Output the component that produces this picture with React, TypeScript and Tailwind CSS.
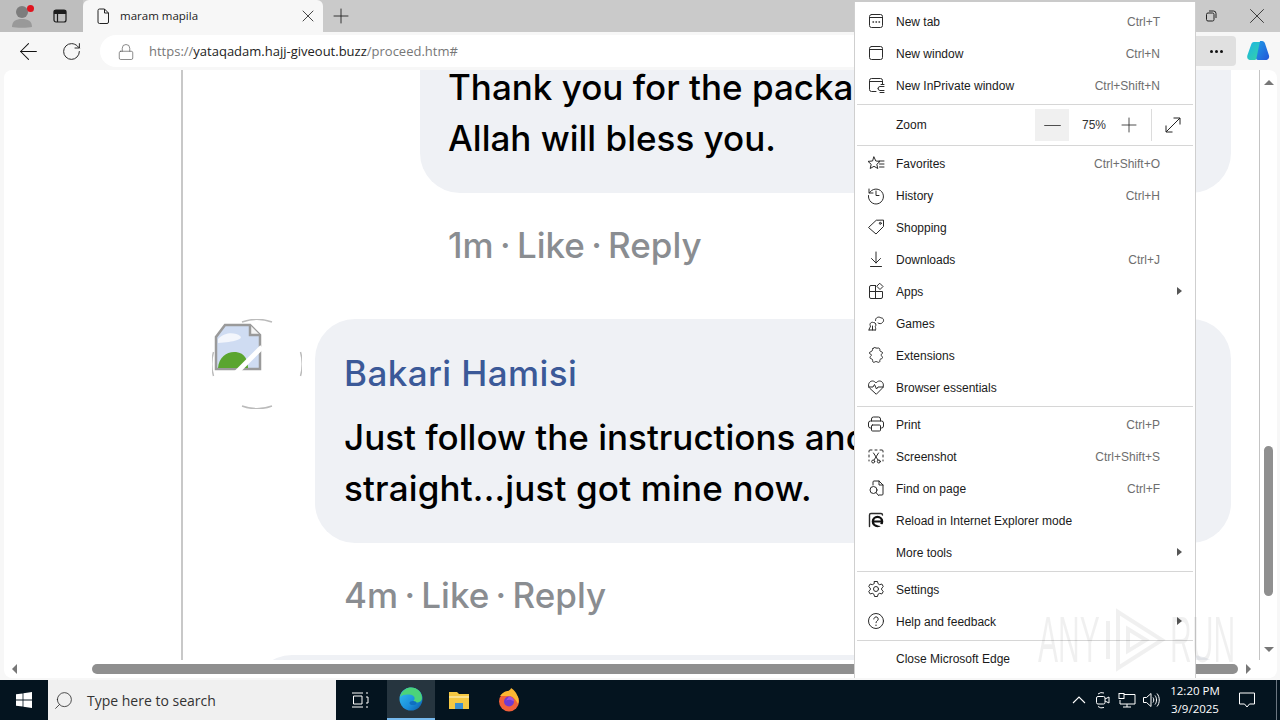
import React from 'react';
import { ArrowLeft, RotateCw, Lock, X, Plus, Minus, Search } from 'lucide-react';

const ui = "font-['Open_Sans','Noto_Sans',sans-serif]";
const menuFont = "font-['Liberation_Sans',sans-serif]";

function Ic({ children }: { children: React.ReactNode }) {
  return (
    <svg width="20" height="20" viewBox="0 0 20 20" fill="none" stroke="#2b2b2b" strokeWidth="1" strokeLinecap="round" strokeLinejoin="round">
      {children}
    </svg>
  );
}

const icons: Record<string, React.ReactNode> = {
  newtab: <Ic><rect x="3.5" y="3.5" width="13" height="13" rx="2" /><path d="M3.5 6.5h13" /><path d="M7 11h.5M10 11h.5M13 11h.5" strokeWidth="1.4" /></Ic>,
  window: <Ic><rect x="3.5" y="3.5" width="13" height="13" rx="2" /><path d="M3.5 6.5h13" /></Ic>,
  private: <Ic><path d="M10 16.5H5.500a2 2 0 0 1-2-2v-9a2 2 0 0 1 2-2h9a2 2 0 0 1 2 2V9" /><path d="M3.500 6.500h13" /><path d="M12 13.500a2 2 0 0 1 2-2h4M12 13.500a2 2 0 0 0 2 2h4M14 17.500h4M15 9.500h3" /></Ic>,
  star: <Ic><path d="M8 3l1.800 4 4.200.4-3.200 2.900 1 4.200L8 12.300l-3.800 2.200 1-4.200L2 7.400l4.200-.4z" transform="translate(0 1)" /><path d="M13 8h5M13.500 11h4.500M13.500 14h4.500" /></Ic>,
  history: <Ic><path d="M3 4v4h4" /><path d="M3.300 8A7.500 7.500 0 1 1 2.500 10.500" /><path d="M10 6v4.500h3" /></Ic>,
  tag: <Ic><path d="M17.500 3.500v6L10 17 2.500 10.500 10 3.500z" /><circle cx="14.300" cy="6.300" r="1" /></Ic>,
  download: <Ic><path d="M10 3v11M5.500 9.500L10 14l4.500-4.500M4.500 17.500h11" /></Ic>,
  apps: <Ic><path d="M9.500 4.500H5a1.500 1.500 0 0 0-1.500 1.500v10A1.500 1.500 0 0 0 5 17.500h10a1.500 1.500 0 0 0 1.500-1.500V10.500H3.500M9.500 4.500v13" /><path d="M14 2.500l3 3-3 3-3-3z" /></Ic>,
  games: <Ic><path d="M3 17c0-2 1.500-2.500 1.500-4-1.500-2 .500-4.500 3-3.500 2.500 0 3 2.500 1.800 4 .300 1.500.700 2.500.200 3.500M3 17h6.500M6.500 13v4" /><path d="M9.500 7.500c-.500-3 3.500-4.500 5.500-2.500 2.500-.500 3.500 3 1.500 4.500-1 1.500-3.500 1.500-4.500.500" /></Ic>,
  ext: <Ic><path d="M7 3.500c.800-1.500 1.500-1 3-.500 1.500.500 2.500-.500 3.500.500.800.800 0 1.500.500 2.500.500.800 2.500.300 2.500 2 0 1-1.500 1-1.500 2s1.500 1.200 1.500 2.500c0 1.500-2 1.200-2.500 2-.500 1 .300 1.800-.500 2.500-1 1-2.500-.500-3.500-.500s-2 1.500-3 .500c-.800-.800 0-1.800-.500-2.500-.500-.800-2.500-.500-2.500-2 0-1.300 1.500-1.500 1.500-2.500S3.500 9.500 3.500 8c0-1.700 2-1 2.500-2 .400-.800.500-1.800 1-2.500z" /></Ic>,
  heart: <Ic><path d="M10 17l-6-5.500C1 8.500 3 4 6.500 4 8 4 9.200 5 10 6c.800-1 2-2 3.500-2C17 4 19 8.500 16 11.500z" /><path d="M2.500 10H7l1.500-2.500 2 4.500 1.500-2h5.500" /></Ic>,
  print: <Ic><path d="M5.500 7V5a2 2 0 0 1 2-2h5a2 2 0 0 1 2 2v2" /><path d="M5.500 14H4.500a2 2 0 0 1-2-2V9a2 2 0 0 1 2-2h11a2 2 0 0 1 2 2v3a2 2 0 0 1-2 2h-1" /><rect x="5.500" y="11" width="9" height="6" rx="1" /></Ic>,
  shot: <Ic><path d="M3 6V5a1 1 0 0 1 1-1h2M9 4h2M14 4h2a1 1 0 0 1 1 1v1M17 9v2M17 14v1M3 9v2M3 14v1" /><path d="M7.500 7l4.500 7M12.500 7L8 14" /><circle cx="7.200" cy="15.500" r="1.500" /><circle cx="12.800" cy="15.500" r="1.500" /></Ic>,
  find: <Ic><path d="M7 7V4a1 1 0 0 1 1-1h5l4 4v9a1 1 0 0 1-1 1h-3" /><path d="M13 3v4h4" /><circle cx="7.500" cy="12" r="3.500" /><path d="M10 14.500l2.500 3" /></Ic>,
  ie: (
    <Ic>
      <path d="M3.500 16.500V5a1.500 1.500 0 0 1 1.500-1.500h10A1.500 1.500 0 0 1 16.500 5" strokeWidth="1.400" />
      <circle cx="11.500" cy="11.500" r="4.600" stroke="#111" strokeWidth="2.400" />
      <path d="M7 11.500h9" stroke="#111" strokeWidth="1.800" />
      <path d="M12 14.500l5 1" stroke="#fff" strokeWidth="2" />
    </Ic>
  ),
  gear: <Ic><path d="M8.500 2.500h3l.5 2.200 1.700 1 2.100-.700 1.500 2.600-1.600 1.500v1.800l1.600 1.500-1.500 2.600-2.100-.700-1.700 1-.5 2.200h-3l-.5-2.200-1.700-1-2.100.700-1.500-2.600 1.600-1.500V9.100L2.700 7.600l1.500-2.600 2.100.700 1.700-1z" /><circle cx="10" cy="10" r="2.500" /></Ic>,
  help: <Ic><circle cx="10" cy="10" r="7.500" /><path d="M7.800 8a2.200 2.200 0 1 1 3.400 1.900c-.800.500-1.200 1-1.200 1.800" /><path d="M10 14.200v.1" strokeWidth="1.400" /></Ic>,
};

function Row({ label, icon, shortcut, arrow }: { label: string; icon?: string; shortcut?: string; arrow?: boolean }) {
  return (
    <div className={`h-[32px] flex items-center relative text-[12px] text-[#1a1a1a] ${menuFont}`}>
      <div className="w-[41px] flex justify-end pr-[10px] shrink-0">{icon ? icons[icon] : null}</div>
      <span className="pt-px">{label}</span>
      {shortcut ? <span className="pt-px ml-auto mr-[35px] text-[#6e6e6e]">{shortcut}</span> : null}
      {arrow ? <div className="ml-auto mr-[13px] w-0 h-0 border-y-[4px] border-y-transparent border-l-[5px] border-l-[#555]" /> : null}
    </div>
  );
}

function Sep() {
  return <div className="h-px bg-[#d6d6d6] mt-[3px] mb-px mx-[2px]" />;
}

function Menu() {
  return (
    <div className="absolute left-[854px] top-[2px] w-[342px] h-[676px] bg-white border-x border-[#cfcfcf] pt-[3px] z-10">
      <Row icon="newtab" label="New tab" shortcut="Ctrl+T" />
      <Row icon="window" label="New window" shortcut="Ctrl+N" />
      <Row icon="private" label="New InPrivate window" shortcut="Ctrl+Shift+N" />
      <div className="h-px bg-[#d6d6d6] mt-[3px] mx-[2px]" />
      <div className={`h-[40px] flex items-center text-[12px] text-[#1a1a1a] ${menuFont}`}>
        <span className="ml-[41px]">Zoom</span>
        <div className="ml-auto mr-[13px] flex items-center">
          <div className="w-[34px] h-[32px] bg-[#f0f0f0] flex items-center justify-center">
            <Minus size={27} strokeWidth={0.7} color="#222" />
          </div>
          <span className="w-[50px] text-center text-[#333]">75%</span>
          <div className="w-[20px] flex justify-center">
            <Plus className="shrink-0" size={24} strokeWidth={0.8} color="#222" />
          </div>
          <div className="ml-[12px] w-px h-[32px] bg-[#dcdcdc]" />
          <svg className="ml-[12px]" width="18" height="18" viewBox="0 0 18 18" fill="none" stroke="#222" strokeWidth="1">
            <path d="M2 16L16 2M9.500 2H16v6.500M2 9.500V16h6.500" />
          </svg>
        </div>
      </div>
      <div className="h-px bg-[#d6d6d6] mb-px mx-[2px]" />
      <Row icon="star" label="Favorites" shortcut="Ctrl+Shift+O" />
      <Row icon="history" label="History" shortcut="Ctrl+H" />
      <Row icon="tag" label="Shopping" />
      <Row icon="download" label="Downloads" shortcut="Ctrl+J" />
      <Row icon="apps" label="Apps" arrow />
      <Row icon="games" label="Games" />
      <Row icon="ext" label="Extensions" />
      <Row icon="heart" label="Browser essentials" />
      <Sep />
      <Row icon="print" label="Print" shortcut="Ctrl+P" />
      <Row icon="shot" label="Screenshot" shortcut="Ctrl+Shift+S" />
      <Row icon="find" label="Find on page" shortcut="Ctrl+F" />
      <Row icon="ie" label="Reload in Internet Explorer mode" />
      <Row label="More tools" arrow />
      <Sep />
      <Row icon="gear" label="Settings" />
      <Row icon="help" label="Help and feedback" arrow />
      <Sep />
      <Row label="Close Microsoft Edge" />
    </div>
  );
}

function Watermark() {
  return (
    <div className="absolute left-[1038px] top-[606px] z-20 flex items-center h-[68px] text-[64px] leading-none font-['Liberation_Sans',sans-serif] text-black/[0.06]">
      <span className="scale-x-[0.47] origin-left w-[66px]">ANY</span>
      <svg width="62" height="66" viewBox="0 0 62 66" fill="none" stroke="#000" strokeOpacity="0.06" strokeWidth="4">
        <path d="M4 14v38M14 5l44 28-44 28z" />
        <path d="M24 22l18 11-18 11z" />
      </svg>
      <span className="ml-[4px] scale-x-[0.47] origin-left w-[66px]">RUN</span>
    </div>
  );
}

function Tabs() {
  return (
    <div className="h-[32px] bg-[#cacaca] flex shrink-0 relative">
      <div className="w-[83px] bg-[#bebebe] flex items-center relative">
        <svg className="ml-[11px]" width="22" height="24" viewBox="0 0 22 24" fill="#7d7d7d">
          <circle cx="11" cy="8" r="6" />
          <path d="M1 23c0-6 4-8 10-8s10 2 10 8c-3 1-17 1-20 0z" fill="#999" />
        </svg>
        <div className="absolute left-[27px] top-[5px] w-[7px] h-[7px] rounded-full bg-[#e0141e]" />
        <svg className="ml-[19px]" width="16" height="16" viewBox="0 0 16 16" fill="none" stroke="#1c1c1c" strokeWidth="1.200">
          <rect x="2" y="2" width="12" height="12" rx="2" />
          <path d="M2 5.500h12M5.500 5.500V14" />
          <path d="M2.500 2.500h11v3h-11z" fill="#1c1c1c" />
        </svg>
      </div>
      <div className={`w-[240px] bg-[#f7f7f7] rounded-t-[6px] flex items-center pl-[13px] pr-[5px] text-[11.5px] text-[#1c1c1c] ${ui}`}>
        <svg width="14" height="16" viewBox="0 0 14 16" fill="none" stroke="#222" strokeWidth="1">
          <path d="M2 2.500a1.500 1.500 0 0 1 1.500-1.500H8.500L12.500 5v9a1.500 1.500 0 0 1-1.500 1.500H3.500A1.500 1.500 0 0 1 2 14z" />
          <path d="M8.500 1v4h4" />
        </svg>
        <span className="ml-[10px]">maram mapila</span>
        <X className="ml-auto" size={20} strokeWidth={1} color="#222" />
      </div>
      <Plus className="ml-[6px] mt-[4px]" size={24} strokeWidth={0.9} color="#222" />
      <svg className="absolute left-[1205px] top-[10px]" width="12" height="12" viewBox="0 0 12 12" fill="none" stroke="#222" strokeWidth="1">
        <rect x="1.500" y="3" width="7.500" height="8" rx="1.500" />
        <path d="M4 1h4.500A2.500 2.500 0 0 1 11 3.500V8" />
      </svg>
      <X className="absolute left-[1244px] top-[3px]" size={26} strokeWidth={0.7} color="#111" />
    </div>
  );
}

function Toolbar() {
  return (
    <div className={`h-[38px] bg-[#f7f7f7] flex items-center shrink-0 relative ${ui}`}>
      <ArrowLeft className="ml-[15px]" size={27} strokeWidth={0.9} color="#111" />
      <RotateCw className="ml-[19px]" size={21} strokeWidth={1.100} color="#222" />
      <div className="ml-[18px] w-[1080px] h-[32px] bg-white rounded-full flex items-center pl-[17px] text-[13px] pt-[1px]">
        <Lock size={18} strokeWidth={0.9} color="#555" />
        <span className="ml-[14px] text-[#777]">https://</span>
        <span className="text-[#222]">yataqadam.hajj-giveout.buzz</span>
        <span className="text-[#777]">/proceed.htm#</span>
      </div>
      <div className="absolute left-[1196px] top-[4px] w-[40px] h-[30px] bg-[#e0e0e0] rounded-r-[4px] flex items-center justify-center gap-[2px]">
        <div className="w-[3px] h-[3px] bg-[#111] rounded-full" />
        <div className="w-[3px] h-[3px] bg-[#111] rounded-full" />
        <div className="w-[3px] h-[3px] bg-[#111] rounded-full" />
      </div>
      <svg className="absolute left-[1246px] top-[7px]" width="24" height="24" viewBox="0 0 24 24">
        <defs>
          <linearGradient id="cp1" x1="0" y1="0" x2="1" y2="1">
            <stop offset="0" stopColor="#1bb3e8" />
            <stop offset="1" stopColor="#38d6a0" />
          </linearGradient>
          <linearGradient id="cp2" x1="0" y1="0" x2="1" y2="1">
            <stop offset="0" stopColor="#1f9be6" />
            <stop offset="1" stopColor="#2456d8" />
          </linearGradient>
        </defs>
        <path d="M8 3h8l-5 16c-.500 1.500-1.500 2-3 2H5c-3 0-4.500-2-3.500-5L5 6c.500-2 1.500-3 3-3z" fill="url(#cp1)" />
        <path d="M14 2h2c1.500 0 2.500 1 3 2.500l4 12c.700 2.500-1 4.500-3.500 4.500H12c-1.500 0-2-1-1.500-2z" fill="url(#cp2)" />
      </svg>
    </div>
  );
}

function Avatar() {
  return (
    <svg className="shrink-0 blur-[0.4px]" width="90" height="90" viewBox="0 0 90 90" fill="none">
      <path d="M30 3a44 44 0 0 1 30 0M30 87a44 44 0 0 0 30 0" stroke="#bbb" strokeWidth="1.400" />
      <path d="M1.500 33a44 44 0 0 0 0 24M88.500 33a44 44 0 0 1 0 24" stroke="#bbb" strokeWidth="1.400" />
      <path d="M4 50V18l9-12h25l10 10v34z" fill="#cfdcf2" stroke="#9a9a9a" strokeWidth="2.500" />
      <path d="M6 20c8-8 18-6 22-3 4 3-6 6-22 7z" fill="#f3f6fc" />
      <path d="M6 49c1-12 10-17 18-16 9 1 12 8 12 16z" fill="#5aa52f" />
      <path d="M38 6v10h10" fill="#f4f4f4" stroke="#9a9a9a" strokeWidth="2.500" />
      <path d="M24 54L50 28" stroke="#fff" strokeWidth="5" />
    </svg>
  );
}

function Page() {
  const text = "font-['Inter',sans-serif] text-[35px] leading-[51px]";
  return (
    <div className={`flex-1 min-w-0 overflow-hidden ml-[177px] border-l-2 border-[#c8c8c8] pl-[29px] ${text}`}>
      <div className="ml-[208px] mr-[28px] -mt-[8px] bg-[#eff1f5] rounded-b-[40px] pl-[28px] pb-[29px] font-medium text-black whitespace-nowrap">
        <div>Thank you for the package</div>
        <div>Allah will bless you.</div>
      </div>
      <div className="ml-[236px] mt-[27px] text-[#8a8d91] font-medium [word-spacing:-3px]">1m · Like · Reply</div>
      <div className="flex mt-[48px] mr-[28px]">
        <Avatar />
        <div className="flex-1 ml-[13px] h-[224px] bg-[#eff1f5] rounded-[40px] pl-[29px] pt-[29px] font-medium text-black whitespace-nowrap">
          <div className="text-[#3b5998] tracking-[0.4px]">Bakari Hamisi</div>
          <div className="mt-[13px]">Just follow the instructions and</div>
          <div className="tracking-[0.17px]">straight...just got mine now.</div>
        </div>
      </div>
      <div className="ml-[132px] mt-[27px] text-[#8a8d91] font-medium [word-spacing:-3px]">4m · Like · Reply</div>
      <div className="mt-[34px] ml-[40px] mr-[28px] h-[60px] bg-[#eff1f5] rounded-t-[40px]" />
    </div>
  );
}

function Taskbar() {
  return (
    <div className={`h-[40px] bg-[#04141f] flex items-center shrink-0 relative text-white ${ui}`}>
      <div className="w-[48px] flex justify-center">
        <svg width="16" height="16" viewBox="0 0 16 16" fill="#fff">
          <path d="M0 2.300l6.600-.900v6.200H0zM7.400 1.300L16 0v7.600H7.400zM0 8.400h6.600v6.200L0 13.700zM7.400 8.400H16V16l-8.600-1.300z" />
        </svg>
      </div>
      <div className="w-[288px] h-[40px] bg-[#f0f0f0] flex items-center pl-[5px] text-[14px] text-[#333]">
        <Search className="-scale-x-100" size={21} strokeWidth={0.9} color="#222" />
        <span className="ml-[13px]">Type here to search</span>
      </div>
      <svg className="ml-[15px]" width="18" height="18" viewBox="0 0 18 18" fill="none" stroke="#fff" strokeWidth="1">
        <path d="M1 2h11M1 16h11M2.500 5h8.500v8H2.500zM15 2h2M15 6h2v6h-2M15 16h2" />
      </svg>
      <div className="ml-[18px] w-[48px] h-[40px] bg-[#26353f] border-b-2 border-[#76b9ed] flex items-center justify-center">
        <svg width="24" height="24" viewBox="0 0 24 24">
          <defs>
            <linearGradient id="eg" x1="0" y1="0" x2="1" y2="1">
              <stop offset="0" stopColor="#35c1f1" />
              <stop offset="0.600" stopColor="#1b8fdc" />
              <stop offset="1" stopColor="#0c59a4" />
            </linearGradient>
          </defs>
          <circle cx="12" cy="12" r="11.500" fill="url(#eg)" />
          <path d="M1 10C3 3 8 .500 12 .500c6 0 11 4.500 11 10.500 0 3-2.500 4.500-5 4.500-2 0-3.500-.800-3.500-1.800 2-1.500 1.500-5-2.500-6C8 7 3 7.500 1 10z" fill="#4bd37a" />
          <ellipse cx="14" cy="16" rx="3.500" ry="2" fill="#0f6fc0" />
        </svg>
      </div>
      <svg className="ml-[13px]" width="22" height="20" viewBox="0 0 22 20">
        <path d="M1 2h8l2 2h10v15H1z" fill="#f5c842" />
        <path d="M1 6h20v2H1z" fill="#fbe08a" />
        <path d="M7 13h8v6H7z" fill="#3c8fd0" />
      </svg>
      <svg className="ml-[27px]" width="24" height="24" viewBox="0 0 24 24">
        <circle cx="12" cy="13.500" r="10" fill="#f2603a" />
        <path d="M3 8c3-4 6-5 8-5 2-1 3-2 3-3 3 2 5 4 6 7 2 3 2 7 1 9-2-4-4-7-8-8-3 0-7 0-10 0z" fill="#fbb632" />
        <circle cx="12" cy="13.500" r="5" fill="#6f3bd1" />
        <path d="M12 8.500a5 5 0 0 1 5 5c-3-2-6-2-8-1z" fill="#a654d8" />
      </svg>
      <div className="ml-auto flex items-center">
        <svg width="14" height="14" viewBox="0 0 14 14" fill="none" stroke="#fff" strokeWidth="1.100">
          <path d="M1 10l6-6 6 6" />
        </svg>
        <svg className="ml-[9px]" width="16" height="18" viewBox="0 0 16 18" fill="none" stroke="#fff" strokeWidth="1">
          <rect x="1.500" y="5.500" width="8.500" height="7.500" rx="1.500" />
          <path d="M10 8l4-2v6l-4-2M3 3a6 6 0 0 1 6-1M3 15.500a6 6 0 0 0 6 1" />
        </svg>
        <svg className="ml-[7px]" width="18" height="16" viewBox="0 0 18 16" fill="none" stroke="#fff" strokeWidth="1">
          <path d="M6 2.500h11v9.500H2V8M9 12v3M5 15h8" />
          <rect x="1" y="1.500" width="5" height="5" />
        </svg>
        <svg className="ml-[6px]" width="18" height="16" viewBox="0 0 18 16" fill="none" stroke="#fff" strokeWidth="1">
          <path d="M1.500 5.500h3L9 1.500v13l-4.500-4h-3zM11 5.500c1 1.500 1 3.500 0 5M13 3.500c2 2.500 2 6.500 0 9M15 1.500c3 3.500 3 9.500 0 13" />
        </svg>
        <div className="ml-[3px] w-[64px] text-center text-[11.5px] leading-[18px]">
          <div>12:20 PM</div>
          <div>3/9/2025</div>
        </div>
        <svg className="ml-[11px] mr-[24px]" width="18" height="16" viewBox="0 0 18 16" fill="none" stroke="#fff" strokeWidth="1">
          <path d="M1.500 1h15v11h-5L9 15l-2.500-3h-5z" />
        </svg>
      </div>
      <div className="absolute right-[3px] top-0 w-px h-[40px] bg-[#6b7680]" />
    </div>
  );
}

export default function App() {
  return (
    <div className="h-screen w-[1280px] relative overflow-hidden flex flex-col bg-[#f7f7f7]">
      <Tabs />
      <Toolbar />
      <div className="flex-1 min-h-0 pl-[4px] pr-[3px] pb-[2px]">
        <div className="h-full bg-white rounded-lg flex flex-col overflow-hidden">
          <div className="flex-1 min-h-0 flex">
            <Page />
            <div className="w-[18px] shrink-0 border-l border-[#c4c4c4] flex flex-col items-center pt-[10px] relative">
              <div className="w-0 h-0 border-x-[5px] border-x-transparent border-b-[5px] border-b-[#777]" />
              <div className="mt-[361px] w-[9px] h-[150px] rounded-full bg-[#8f8f8f]" />
              <div className="absolute bottom-[8px] w-0 h-0 border-x-[5px] border-x-transparent border-t-[5px] border-t-[#777]" />
            </div>
          </div>
          <div className="h-[18px] shrink-0 flex items-center">
            <div className="ml-[8px] w-0 h-0 border-y-[5px] border-y-transparent border-r-[5px] border-r-[#777]" />
            <div className="ml-[75px] w-[1146px] h-[10px] rounded-full bg-[#8f8f8f]" />
            <div className="ml-[8px] w-0 h-0 border-y-[5px] border-y-transparent border-l-[5px] border-l-[#777]" />
          </div>
        </div>
      </div>
      <Taskbar />
      <Menu />
      <Watermark />
    </div>
  );
}
